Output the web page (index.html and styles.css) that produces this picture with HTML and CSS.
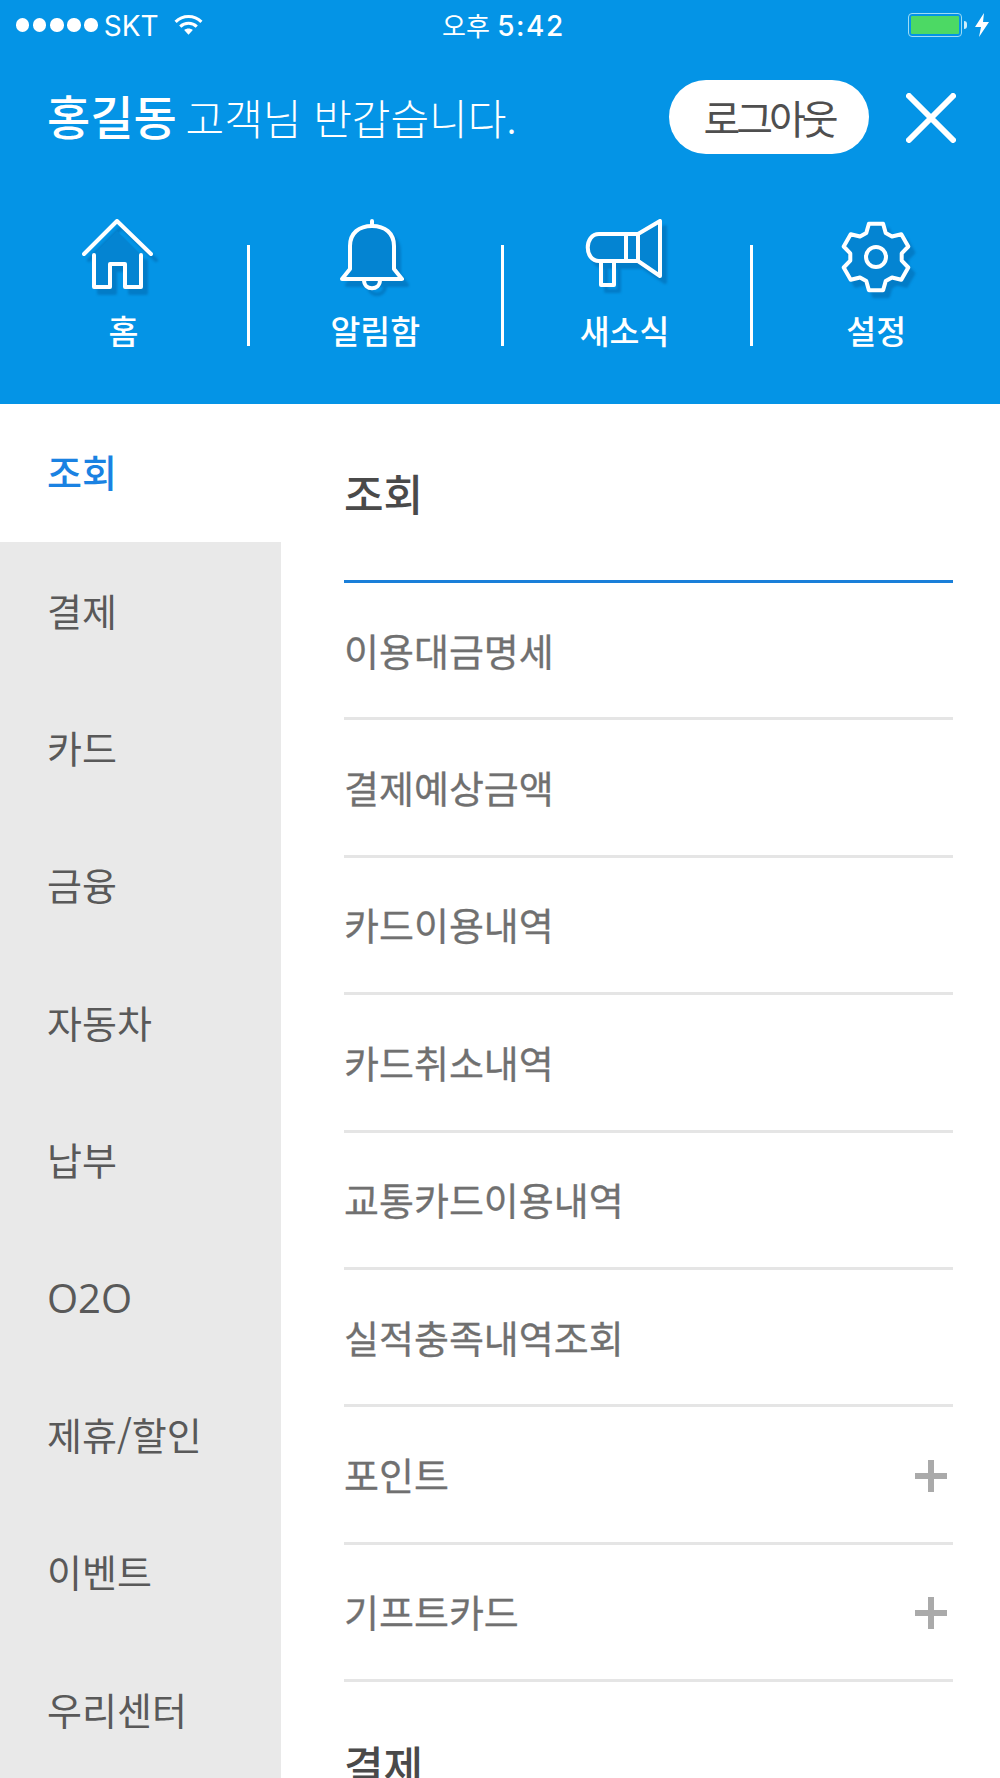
FILE: index.html
```html
<!DOCTYPE html>
<html lang="ko">
<head>
<meta charset="utf-8">
<title>전체 메뉴</title>
<link rel="stylesheet" href="styles.css">
</head>
<body>
<div class="app">
  <header class="top">
    <div class="status">
      <div class="status-left">
        <span class="dots"><i></i><i></i><i></i><i></i><i></i></span>
        <span class="carrier">SKT</span>
        <svg class="wifi" viewBox="0 0 30 23" width="31" height="24"><path d="M2.5 8.5C9.5 1.6 20.5 1.6 27.5 8.5M7 13C11.5 8.8 18.5 8.8 23 13" fill="none" stroke="#fff" stroke-width="3"/><path d="M10.8 16.4C13.3 14.4 16.7 14.4 19.2 16.4L15 21z" fill="#fff"/></svg>
      </div>
      <div class="clock">오후 <span class="clock-time">5:42</span></div>
      <div class="status-right">
        <span class="battery"><span class="battery-fill"></span></span>
        <span class="battery-tip"></span>
        <svg class="bolt" viewBox="0 0 14 24" width="14" height="24"><path d="M9 0L0 14H6L4 24L14 9H8z" fill="#fff"/></svg>
      </div>
    </div>
    <div class="greet">
      <p class="hello"><strong>홍길동</strong> 고객님 반갑습니다.</p>
      <button class="logout">로그아웃</button>
      <svg class="close" viewBox="0 0 50 50" width="50" height="50"><path d="M3 3L47 47M47 3L3 47" stroke="#fff" stroke-width="6" stroke-linecap="round"/></svg>
    </div>
    <nav class="quick">
      <div class="quick-item">
        <svg class="qi" viewBox="4 0 80 76" width="80" height="76"><path class="fillp" d="M14 35L37 12L60 35V68H45V45H30V68H14z"/><path class="st" d="M4 35L37 2L71 35M14 36V68H30V45H45V68H61V36"/></svg>
        <span>홈</span>
      </div>
      <div class="divider"></div>
      <div class="quick-item">
        <svg class="qi" viewBox="3 0 80 76" width="80" height="76"><path class="fillp st" d="M18 50V27C18 14 27 7 40 7S62 14 62 27V50L70 60H10z"/><path class="st" d="M40 2V6M32 61C32 72 48 72 48 61"/></svg>
        <span>알림함</span>
      </div>
      <div class="divider"></div>
      <div class="quick-item">
        <svg class="qi" viewBox="1 0 80 76" width="80" height="76"><path class="fillp st" d="M54 15L76 2V57L54 42V15H15C0 15 0 42 15 42H54M42 15V42"/><path class="st" d="M17 43V66H30V43"/></svg>
        <span>새소식</span>
      </div>
      <div class="divider"></div>
      <div class="quick-item">
        <svg class="qi" viewBox="-40 -38 80 76" width="80" height="76"><path class="fillp st" d="M-9.7-24.1L-7.1-33.3H7.1L9.7-24.1L16-20.5L25.3-22.8L32.3-10.5L25.7-3.6V3.6L32.3 10.5L25.3 22.8L16 20.5L9.7 24.1L7.1 33.3H-7.1L-9.7 24.1L-16 20.5L-25.3 22.8L-32.3 10.5L-25.7 3.6V-3.6L-32.3-10.5L-25.3-22.8L-16-20.5z"/><circle class="st" cx="0" cy="0" r="10"/></svg>
        <span>설정</span>
      </div>
    </nav>
  </header>
  <div class="menu">
    <ul class="side">
      <li class="side-item is-active">조회</li>
      <li class="side-item">결제</li>
      <li class="side-item">카드</li>
      <li class="side-item">금융</li>
      <li class="side-item">자동차</li>
      <li class="side-item">납부</li>
      <li class="side-item latin">O2O</li>
      <li class="side-item">제휴/할인</li>
      <li class="side-item">이벤트</li>
      <li class="side-item">우리센터</li>
    </ul>
    <div class="list">
      <h2 class="list-head first">조회</h2>
      <div class="row">이용대금명세</div>
      <div class="row">결제예상금액</div>
      <div class="row">카드이용내역</div>
      <div class="row">카드취소내역</div>
      <div class="row">교통카드이용내역</div>
      <div class="row">실적충족내역조회</div>
      <div class="row">포인트<span class="plus"></span></div>
      <div class="row">기프트카드<span class="plus"></span></div>
      <h2 class="list-head last">결제</h2>
    </div>
  </div>
</div>
</body>
</html>
```
FILE: styles.css
```css
* { box-sizing: border-box; }
html, body { margin: 0; padding: 0; background: #fff; }
body { font-family: "Noto Sans CJK KR", "Noto Sans", sans-serif; }
.app { width: 1000px; height: 1778px; overflow: hidden; display: flex; flex-direction: column; }

.top { height: 404px; flex: none; background: #0494e6; color: #fff; display: flex; flex-direction: column; }

.status { height: 50px; flex: none; display: flex; align-items: center; justify-content: space-between; padding: 0 11px 0 16px; position: relative; }
.status-left { display: flex; align-items: center; }
.dots { display: flex; gap: 3.7px; }
.dots i { display: block; width: 13.4px; height: 13.4px; border-radius: 50%; background: #fff; }
.carrier { font-family: Inter, Roboto, sans-serif; font-size: 28px; line-height: 30px; margin-left: 6px; margin-top: 2px; }
.wifi { margin-left: 14px; }
.clock { position: absolute; left: 442px; top: 6px; font-size: 26px; line-height: 38px; font-weight: 400; }
.clock-time { font-family: Inter, Roboto, sans-serif; font-size: 28px; font-weight: 500; letter-spacing: 1.6px; }
.status-right { display: flex; align-items: center; }
.battery { display: block; width: 54px; height: 24px; border: 1.5px solid #9fdcf5; border-radius: 4px; padding: 2px; }
.battery-fill { display: block; height: 100%; background: #4cd964; border-radius: 1px; }
.battery-tip { display: block; width: 3px; height: 8px; background: #cdeefb; margin-left: 2px; border-radius: 0 3px 3px 0; }
.bolt { margin-left: 8px; }

.greet { height: 134px; flex: none; display: flex; align-items: center; padding: 0 44px 0 47px; }
.hello { margin: 0; flex: 1; font-size: 42px; line-height: 60px; font-weight: 300; white-space: nowrap; margin-top: -3px; }
.hello strong { font-size: 47px; font-weight: 500; margin-right: -3px; }
.logout { width: 200px; height: 74px; border: 0; border-radius: 37px; background: #fff; color: #4f4f4f; font: 400 40px/74px "Noto Sans CJK KR", sans-serif; letter-spacing: -4px; padding: 0; margin-right: 37px; }
.close { flex: none; margin-top: 1px; }

.quick { flex: 1; display: flex; align-items: flex-start; }
.quick-item { flex: 1; display: flex; flex-direction: column; align-items: center; margin-top: 35px; }
.quick-item:nth-child(1) { flex: 0 0 247px; }
.quick-item:nth-child(3) { flex: 0 0 250.5px; }
.quick-item:nth-child(5) { flex: 0 0 246px; padding-right: 4px; }
.quick-item span { font-size: 32.5px; line-height: 46px; font-weight: 500; margin-top: 12px; }
.qi { filter: drop-shadow(5px 6px 1px rgba(0, 70, 130, .3)); overflow: visible; }
.st { fill: none; stroke: #fff; stroke-width: 4; stroke-linecap: round; stroke-linejoin: round; }
.fillp { fill: #0484d2; }
.divider { flex: none; width: 3px; height: 101px; background: #fff; margin-top: 61px; }

.menu { flex: 1; display: flex; min-height: 0; }
.side { flex: none; width: 281px; margin: 0; padding: 0; list-style: none; background: #e9e9e9; }
.side-item { height: 137.4px; padding: 0 0 4px 47px; display: flex; align-items: center; font-size: 38px; color: #595959; }
.side-item.is-active { height: 138.4px; padding-bottom: 5px; background: #fff; color: #1a82e2; font-weight: 500; }
.side-item.latin { font-family: "Open Sans", sans-serif; font-size: 40px; padding-bottom: 1px; }

.list { flex: 1; min-width: 0; padding: 0 47px 0 63px; }
.list-head { margin: 0; display: flex; align-items: center; font-size: 43px; font-weight: 500; color: #4a4a4a; }
.list-head.first { height: 179px; padding-bottom: 1px; border-bottom: 3px solid #1a7fd9; }
.list-head.last { height: 164px; }
.row { height: 137.4px; padding: 0 6px 2px 0; border-bottom: 3px solid #e5e5e5; display: flex; align-items: center; justify-content: space-between; font-size: 38px; color: #707070; -webkit-text-stroke: .3px #707070; }
.plus { width: 32px; height: 32px; flex: none; margin-top: 5px; background: linear-gradient(#aaa, #aaa) center / 100% 6px no-repeat, linear-gradient(#aaa, #aaa) center / 6px 100% no-repeat; }
```
